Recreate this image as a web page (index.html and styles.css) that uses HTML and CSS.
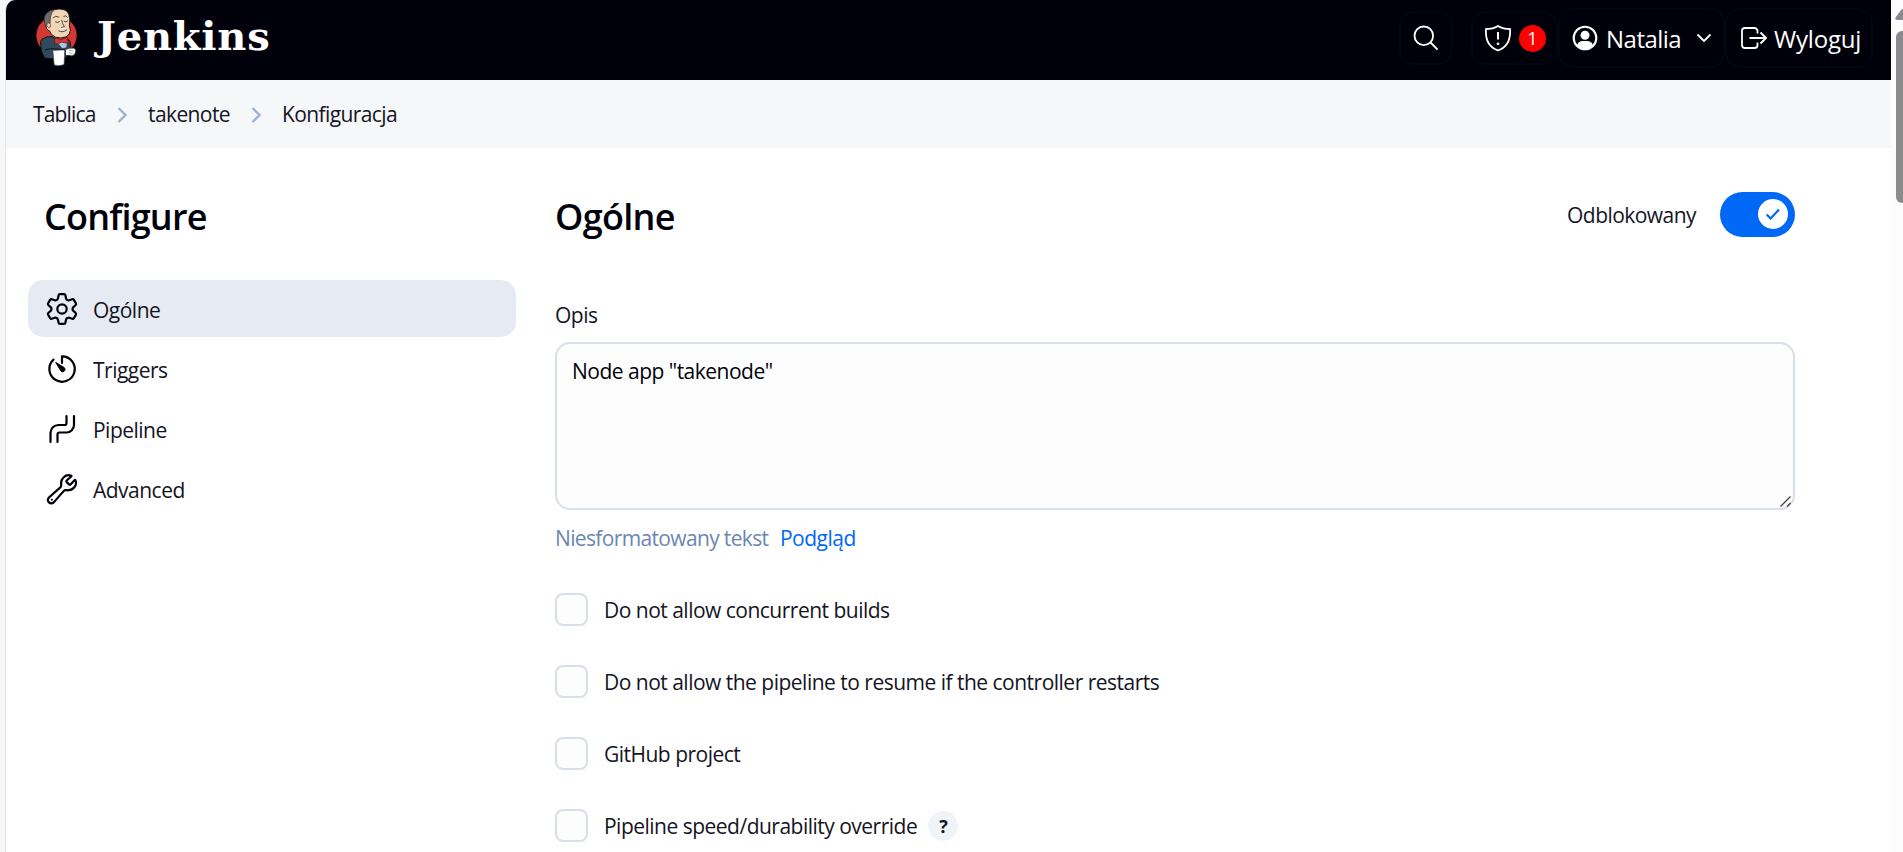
FILE: index.html
```html
<!DOCTYPE html>
<html lang="pl">
<head>
<meta charset="utf-8">
<title>takenote Konfiguracja [Jenkins]</title>
<link rel="stylesheet" href="styles.css">
</head>
<body>
<div class="window">
<div class="page">
  <header class="header">
    <a class="brand">
      <svg class="mascot" viewBox="30 20 130 185">
        <ellipse cx="95" cy="108" rx="61" ry="59" fill="#d33833"/>
        <path d="M50 120 Q66 108 84 112 L112 138 L128 118 L136 126 Q140 138 134 158 L124 174 L82 178 L60 176 Q47 160 47 126 Z" fill="#2f4a5c" stroke="#111" stroke-width="3"/>
        <path d="M96 128 L110 124 L128 128 L126 145 L112 148 Z" fill="#a9c7dc" stroke="#222" stroke-width="2"/>
        <path d="M63 74 Q54 52 66 40 Q84 26 104 28 Q128 28 133 46 Q137 60 134 78 L137 92 Q136 106 124 112 Q108 118 92 113 Q78 107 74 94 Q62 90 63 74 Z" fill="#f0d6b7" stroke="#1b1712" stroke-width="3"/>
        <path d="M62 78 Q52 56 64 42 Q76 30 90 29 Q78 38 77 52 Q75 60 76 72 Q69 67 66 77 Z" fill="#6d6b6d" stroke="#222" stroke-width="2"/>
        <path d="M66 78 Q64 68 72 70 Q78 72 77 82 Q70 88 66 78" fill="#f0d6b7" stroke="#3a3027" stroke-width="2"/>
        <path d="M85 54 Q92 46 102 52 M117 50 Q124 45 128 52 M92 67 Q99 72 104 66 M118 65 Q124 70 129 64 M111 62 Q112 74 119 81 L110 84 M102 94 Q114 101 126 91" fill="none" stroke="#3a3027" stroke-width="2.600" stroke-linecap="round"/>
        <path d="M105 89 Q112 84 122 87" fill="none" stroke="#fff" stroke-width="2.500"/>
        <path d="M90 114 L107 121 L128 113 L131 132 L111 128 L90 135 Z" fill="#d33833" stroke="#541512" stroke-width="2"/>
        <path d="M84 153 L120 151 L118 196 Q102 202 88 197 Z" fill="#fff" stroke="#444" stroke-width="2"/>
        <path d="M122 150 Q132 144 147 146 L154 151 L151 164 Q143 174 132 168 L122 169 Z" fill="#fff" stroke="#333" stroke-width="3"/>
        <path d="M133 152 L145 155 M132 160 L144 163" stroke="#777" stroke-width="2"/>
        <path d="M60 152 Q76 145 96 149 L120 151" fill="none" stroke="#111" stroke-width="3"/>
      </svg>
      <span class="brand-name">Jenkins</span>
    </a>
    <div class="actions">
      <a class="action action-search">
        <svg width="26" height="26" viewBox="0 0 26 26" class="line"><circle cx="10.8" cy="10.8" r="9.3"/><path d="M17.5 17.5L24.6 24.6"/></svg>
      </a>
      <a class="action action-shield">
        <svg width="28" height="28" viewBox="0 0 28 28" class="line"><path d="M14 1.9C10.5 4 6.500 5 2 5C1.300 15 4 23 14 26.300C24 23 26.700 15 26 5C21.500 5 17.500 4 14 1.900Z"/><path d="M14 8V15.500" stroke-width="2"/><circle cx="14" cy="19.800" r="0.500"/></svg>
        <span class="badge">1</span>
      </a>
      <a class="action action-user">
        <svg width="26" height="26" viewBox="0 0 26 26"><circle cx="13" cy="13" r="11.300" fill="none" stroke="#fff" stroke-width="2.100"/><circle cx="13" cy="10.200" r="4.500" fill="#fff"/><path d="M5 20.500C6 17 8.500 16 11 16H15C17.500 16 20 17 21 20.500A11 11 0 0 1 5 20.500Z" fill="#fff"/></svg>
        <span class="user-name">Natalia</span>
        <svg width="16" height="10" viewBox="0 0 16 10" class="line"><path d="M1.500 1.500L8 8L14.500 1.500"/></svg>
      </a>
      <a class="action action-logout">
        <svg width="26" height="22" viewBox="0 0 26 22" class="line"><path d="M16.500 6.500V4A3 3 0 0 0 13.500 1H4A3 3 0 0 0 1 4V18A3 3 0 0 0 4 21H13.500A3 3 0 0 0 16.500 18V15.500M8.500 11H24.500M19.500 5.500L25 11L19.500 16.500"/></svg>
        <span class="logout-name">Wyloguj</span>
      </a>
    </div>
  </header>
  <nav class="breadcrumbs">
    <span class="crumb crumb-home">Tablica</span>
    <svg width="10" height="18" viewBox="0 0 10 18"><path d="M1.500 2L8.500 9L1.500 16"/></svg>
    <span class="crumb crumb-job">takenote</span>
    <svg width="10" height="18" viewBox="0 0 10 18"><path d="M1.500 2L8.500 9L1.500 16"/></svg>
    <span class="crumb crumb-page">Konfiguracja</span>
  </nav>
  <div class="content">
    <aside class="sidebar">
      <h1 class="title title-side">Configure</h1>
      <div class="task task-active">
        <svg class="icon" viewBox="0 0 32 32"><path d="M12.600 2.200Q12.800 1.200 14 1.200H18Q19.200 1.200 19.400 2.200L20 5.200Q20.300 6.400 21.300 7Q22.300 7.500 23.300 7.200L26.200 6.200Q27.300 5.900 27.900 6.900L29.900 10.300Q30.400 11.300 29.700 12L27.400 14.100Q26.500 15 26.500 16Q26.500 17 27.400 17.900L29.700 20Q30.400 20.700 29.900 21.700L27.900 25.100Q27.300 26.100 26.200 25.800L23.300 24.800Q22.300 24.500 21.300 25Q20.300 25.600 20 26.800L19.400 29.800Q19.200 30.800 18 30.800H14Q12.800 30.800 12.600 29.800L12 26.800Q11.700 25.600 10.700 25Q9.700 24.500 8.700 24.800L5.800 25.800Q4.700 26.100 4.100 25.100L2.100 21.700Q1.600 20.700 2.300 20L4.600 17.900Q5.500 17 5.500 16Q5.500 15 4.600 14.100L2.300 12Q1.600 11.300 2.100 10.300L4.100 6.900Q4.700 5.900 5.800 6.200L8.700 7.200Q9.700 7.500 10.700 7Q11.700 6.400 12 5.200Z"/><circle cx="16" cy="16" r="4.700"/></svg>
        <span>Ogólne</span>
      </div>
      <div class="task">
        <svg class="icon" viewBox="0 0 32 32"><path d="M7.500 6.600A12.700 12.700 0 1 0 16 3.300V10"/><path class="solid" d="M10 9.600L18.200 14.600A2.200 2.200 0 0 1 15.100 18.200Z"/></svg>
        <span>Triggers</span>
      </div>
      <div class="task">
        <svg class="icon" viewBox="0 0 32 32"><path d="M4.500 29V20A8 8 0 0 1 12.500 12H18.500A2 2 0 0 0 20.500 10V3M11.500 29V21.500A2 2 0 0 1 13.500 19.500H20.500A7.500 7.500 0 0 0 28 12V3"/></svg>
        <span>Pipeline</span>
      </div>
      <div class="task">
        <svg class="icon" viewBox="0 0 32 32"><path d="M25.300 2.700C19.500 0.800 14.200 5.500 15.200 12C15.300 13.200 14.900 13.800 14.300 14.400L3.200 24.200C-0.300 28 4.500 32.500 8 29.100L17.600 18.100C18.300 17.300 19 17.100 20 17.200C27 18 31.500 12.300 29.500 7.300C29.300 6.800 28.800 6.900 28.500 7.200L24.500 11.400Q23.800 12 23 11.400L20.700 9.100Q20 8.300 20.700 7.500L25 3.600Q25.700 3 25.300 2.700Z"/><circle class="solid" cx="5.800" cy="26.800" r=".5"/></svg>
        <span>Advanced</span>
      </div>
    </aside>
    <main class="main">
      <div class="main-head">
        <h2 class="title">Ogólne</h2>
        <div class="enable">
          <span class="enable-label">Odblokowany</span>
          <span class="toggle"><span class="knob"><svg width="16" height="14" viewBox="0 0 16 14"><path d="M1.700 7.400L5.600 11.400L14 2.500" fill="none" stroke="#0068f7" stroke-width="2.200"/></svg></span></span>
        </div>
      </div>
      <div class="label">Opis</div>
      <div class="textarea"><span>Node app "takenode"</span>
        <svg class="grip" width="13" height="13" viewBox="0 0 13 13"><path d="M1.500 11.500L11.500 1.500M8 11.500L11.500 8"/></svg>
      </div>
      <div class="hint"><span class="format">Niesformatowany tekst</span><a class="preview">Podgląd</a></div>
      <div class="option"><span class="checkbox"></span><span>Do not allow concurrent builds</span></div>
      <div class="option"><span class="checkbox"></span><span>Do not allow the pipeline to resume if the controller restarts</span></div>
      <div class="option"><span class="checkbox"></span><span>GitHub project</span></div>
      <div class="option"><span class="checkbox"></span><span>Pipeline speed/durability override</span><span class="help">?</span></div>
    </main>
  </div>
</div>
<div class="scrollbar">
  <svg class="arrow" width="8" height="11" viewBox="0 0 8 11"><path d="M8 0Q7 0 6 1L.5 8.500Q0 11 2 11H8Z" fill="#8b8b8b"/></svg>
  <div class="thumb"></div>
</div>
</div>
</body>
</html>
```
FILE: styles.css
```css
* { box-sizing: border-box; }
body {
  margin: 0;
  height: 852px;
  overflow: hidden;
  background: #f7f7f7;
  color: #14141f;
  font: 21px/30px "Open Sans", "Noto Sans", sans-serif;
  letter-spacing: -0.51px;
  white-space: nowrap;
}
.window { display: flex; height: 852px; padding-left: 5px; }
.page {
  width: 1886px;
  border-left: 1px solid #e3e3e3;
  border-top-left-radius: 10px;
  background: #fff;
  overflow: hidden;
}
.scrollbar { flex: 1; padding: 9px 0 0 4px; background: #fcfcfc; overflow: hidden; }
.arrow { display: block; }
.thumb { width: 12px; height: 172px; margin: 11px 0 0 1px; border-radius: 6px; background: #8b8b8b; }

.header {
  display: flex;
  justify-content: space-between;
  height: 80px;
  padding: 0 18px 0 29px;
  background: #00000a;
  color: #fff;
}
.brand { display: flex; align-items: flex-start; }
.mascot { width: 43px; height: 62px; margin-top: 6px; }
.brand-name {
  margin: 6px 0 0 19px;
  font: bold 40px/60px "DejaVu Serif", serif;
  letter-spacing: 0.8px;
}
.actions { display: flex; padding-top: 8px; font-size: 24px; }
.action {
  display: flex;
  align-items: center;
  height: 60px;
  border: 2px solid #05050f;
  border-radius: 15px;
}
.line { fill: none; stroke: #fff; stroke-width: 1.8; stroke-linejoin: round; }
.action-search { width: 54px; height: 54px; margin: 3px 18px 0 0; padding-left: 12px; }
.action-shield { width: 87px; height: 54px; margin-top: 3px; padding-left: 11px; gap: 7px; }
.badge {
  width: 27px;
  height: 27px;
  border-radius: 50%;
  background: #f00;
  font-size: 18px;
  line-height: 27px;
  text-align: center;
  letter-spacing: 0;
}
.action-user { width: 167px; padding-left: 12px; }
.user-name { width: 91px; padding: 2px 0 0 8px; margin-right: 7px; }
.action-logout { width: 148px; padding-left: 14px; }
.logout-name { padding: 2px 0 0 7px; letter-spacing: -0.2px; }

.breadcrumbs {
  display: flex;
  align-items: center;
  height: 68px;
  padding: 0 0 0 27px;
  background: #f5f7f9;
}
.breadcrumbs path { fill: none; stroke: #9fb3d3; stroke-width: 2.3; }
.breadcrumbs svg { margin-top: 1px; }
.crumb-home { width: 84px; letter-spacing: -0.85px; }
.crumb-job { width: 103px; margin-left: 21px; letter-spacing: -0.6px; }
.crumb-page { margin-left: 21px; letter-spacing: -0.6px; }

.content { display: flex; padding: 44px 0 0 22px; }
.sidebar { width: 488px; margin-right: 39px; }
.title { margin: 0; font-size: 36px; line-height: 49px; font-weight: 600; color: #00000a; letter-spacing: -0.7px; }
.title-side { padding-left: 16px; margin-bottom: 39px; letter-spacing: -0.8px; }
.task {
  display: flex;
  align-items: center;
  height: 57px;
  margin-bottom: 3px;
  padding-left: 18px;
  border-radius: 15px;
}
.task span { padding: 3px 0 0 15px; }
.task-active { background: #e6ebf3; }
.icon { width: 32px; height: 32px; fill: none; stroke: #00000a; stroke-width: 2.2; stroke-linecap: round; stroke-linejoin: round; }
.solid { fill: #00000a; stroke-width: 1; }

.main { width: 1240px; }
.main-head { display: flex; justify-content: space-between; height: 49px; }
.enable { display: flex; align-items: center; gap: 24px; height: 45px; }
.enable-label { padding-top: 1px; letter-spacing: -0.55px; }
.toggle { display: flex; justify-content: flex-end; width: 75px; height: 45px; padding: 7px; border-radius: 23px; background: #0068f7; }
.knob { display: flex; align-items: center; justify-content: center; width: 30px; height: 30px; border-radius: 50%; background: #fff; }
.label { margin-top: 59px; }
.textarea {
  position: relative;
  height: 168px;
  margin-top: 12px;
  padding: 12px 15px;
  border: 2px solid #d8deea;
  border-radius: 15px;
  background: #fdfdfe;
  color: #00000a;
}
.grip { position: absolute; right: 1px; bottom: 0; fill: none; stroke: #444; stroke-width: 1.4; }
.hint { display: flex; margin: 13px 0 40px; color: #6b86b3; }
.format { width: 225px; letter-spacing: -0.65px; }
.preview { color: #0068f7; }
.option { display: flex; align-items: center; height: 33px; margin-bottom: 39px; }
.checkbox { width: 33px; height: 33px; margin-right: 16px; border: 2px solid #d8deea; border-radius: 8px; background: #fdfdfe; }
.option span:nth-child(2) { padding-top: 1px; }
.help {
  width: 30px;
  height: 30px;
  margin-left: 11px;
  border-radius: 50%;
  background: #f0f3f7;
  font-size: 18px;
  font-weight: 700;
  text-align: center;
}
```
